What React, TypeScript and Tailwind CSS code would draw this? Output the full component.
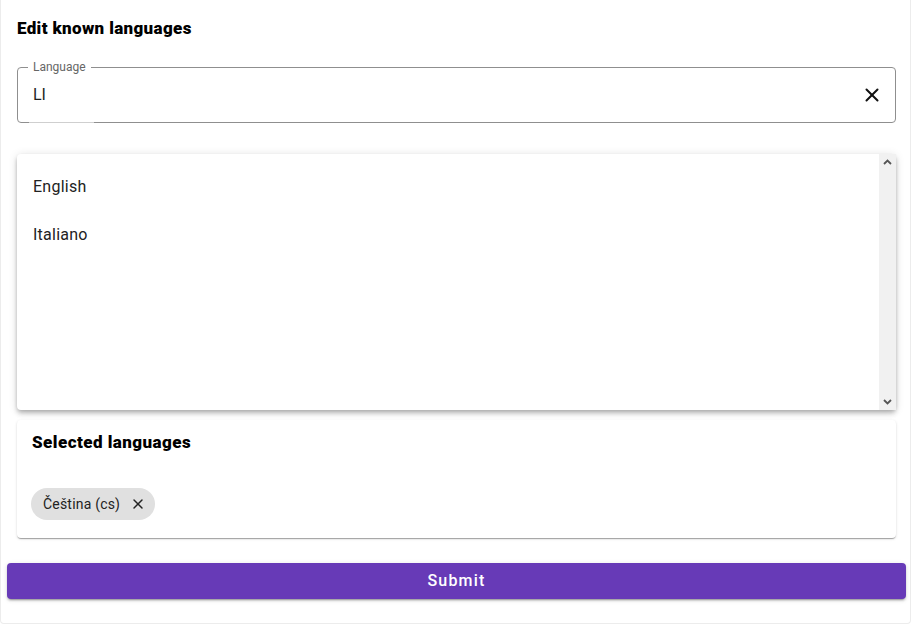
import { X } from "lucide-react";

function LanguageField() {
  return (
    <div className="relative h-[56px] w-full rounded-[4px] border border-[#8f8f8f]">
      <span className="absolute left-[10px] top-[-8px] bg-white px-[5px] text-[12px] leading-[14px] text-[#666]">Language</span>
      <span className="absolute bottom-[-1px] left-[11px] h-px w-[65px] bg-[#cfcfcf]" />
      <div className="flex h-full items-center pl-[15px] pr-[12px]">
        <span className="flex-1 text-[16px] text-[#1f1f1f]">LI</span>
        <X className="size-[22px] text-[#111]" strokeWidth={2.2} />
      </div>
    </div>
  );
}

function ScrollArrow({ up }: { up?: boolean }) {
  return (
    <svg width="9" height="6" viewBox="0 0 9 6">
      <path d={up ? "M1 5 L4.5 1.5 L8 5" : "M1 1 L4.5 4.5 L8 1"} fill="none" stroke="#555" strokeWidth="1.8" />
    </svg>
  );
}

function Options() {
  return (
    <div className="flex h-[256px] w-full rounded-[4px] bg-white shadow-[0_2px_4px_-1px_rgba(0,0,0,0.2),0_4px_5px_0_rgba(0,0,0,0.14),0_1px_10px_0_rgba(0,0,0,0.12)]">
      <ul className="flex-1 py-[8px]">
        <li className="flex h-[48px] items-center px-[16px] pt-[2px] text-[16px] tracking-[0.25px] text-[#222]">English</li>
        <li className="flex h-[48px] items-center px-[16px] pt-[2px] text-[16px] tracking-[0.25px] text-[#222]">Italiano</li>
      </ul>
      <div className="flex w-[17px] flex-col items-center justify-between bg-[#f1f1f1] py-[5px]">
        <ScrollArrow up />
        <ScrollArrow />
      </div>
    </div>
  );
}

function SelectedCard() {
  return (
    <div className="w-full rounded-[4px] bg-white px-[15px] pt-[12px] pb-[18px] shadow-[0_2px_1px_-1px_rgba(0,0,0,0.2),0_1px_1px_0_rgba(0,0,0,0.14),0_1px_3px_0_rgba(0,0,0,0.12)]">
      <h2 className="text-[17px] font-black leading-[20px] tracking-[0.45px] text-black">Selected languages</h2>
      <div className="mt-[36px] flex">
        <div className="-ml-px flex h-[32px] items-center gap-[10px] rounded-full bg-[#e0e0e0] pl-[12px] pr-[9px]">
          <span className="text-[14px] tracking-[0.2px] text-[#222]">Čeština (cs)</span>
          <X className="size-[16px] text-[#222]" strokeWidth={2.2} />
        </div>
      </div>
    </div>
  );
}

export default function App() {
  return (
    <div className="h-[625px] w-[911px] bg-white font-['Roboto',sans-serif]">
      <div className="h-[624px] rounded-b-[4px] border-x border-b border-[#ececec]">
        <div className="flex flex-col pl-[16px] pr-[14px] pt-[18px]">
          <h1 className="text-[17px] font-black leading-[20px] tracking-[0.35px] text-black">Edit known languages</h1>
          <div className="mt-[29px]">
            <LanguageField />
          </div>
          <div className="mt-[31px]">
            <Options />
          </div>
          <div className="mt-[10px]">
            <SelectedCard />
          </div>
        </div>
        <div className="pl-[6px] pr-[4px] pt-[25px]">
          <button className="flex h-[36px] w-full items-center justify-center rounded-[4px] bg-[#673ab7] text-[16px] font-medium tracking-[1.2px] text-white shadow-[0_3px_1px_-2px_rgba(0,0,0,0.2),0_2px_2px_0_rgba(0,0,0,0.14),0_1px_5px_0_rgba(0,0,0,0.12)]">
            Submit
          </button>
        </div>
      </div>
    </div>
  );
}
